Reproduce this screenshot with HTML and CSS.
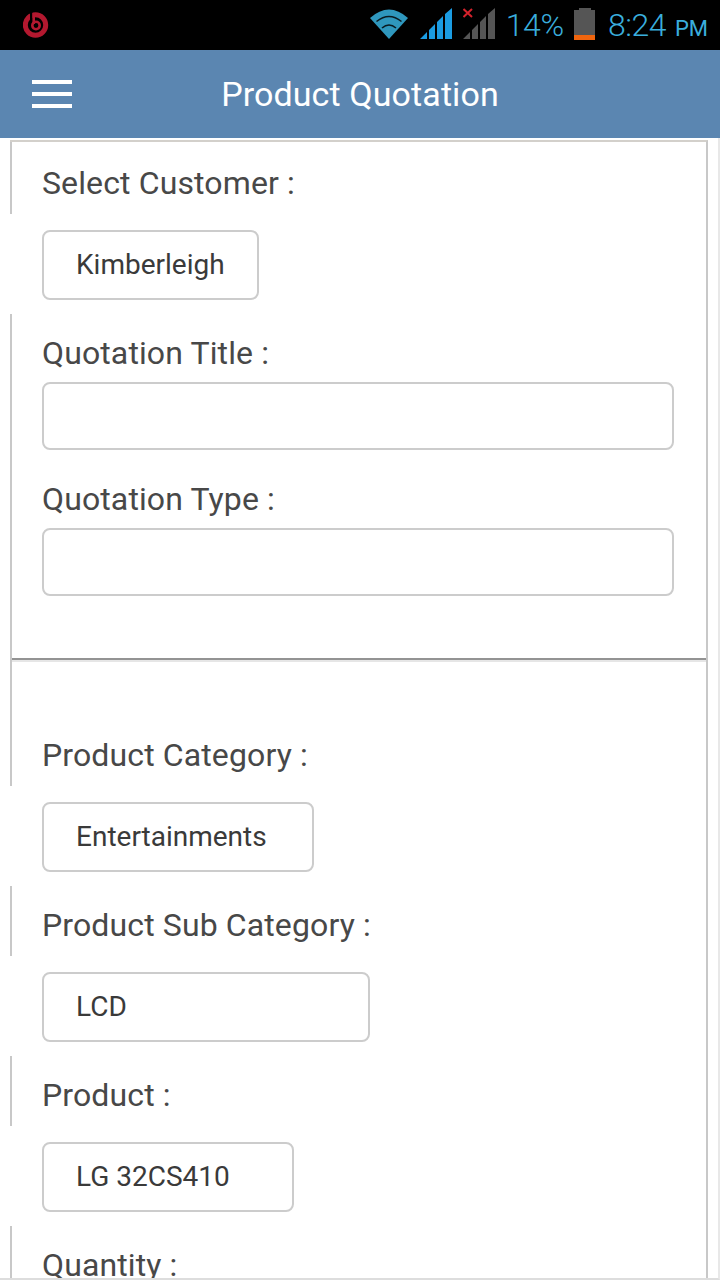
FILE: index.html
```html
<!DOCTYPE html>
<html lang="en">
<head>
<meta charset="utf-8">
<title>Product Quotation</title>
<link rel="stylesheet" href="styles.css">
</head>
<body>
<div class="status">
  <svg class="beats" width="26" height="26" viewBox="0 0 26 26">
    <circle cx="12.5" cy="13" r="10.2" fill="none" stroke="#b3182f" stroke-width="5"/>
    <rect x="7" y="0" width="2.4" height="13" fill="#000"/>
    <rect x="9.4" y="1" width="2.6" height="11" fill="#b3182f"/>
    <circle cx="13" cy="13.5" r="3.7" fill="none" stroke="#b3182f" stroke-width="2.6"/>
  </svg>
  <div class="status-right">
    <svg class="wifi" width="40" height="32" viewBox="0 0 40 32">
      <path d="M20 31 L1 10 Q20 -7 39 10 Z" fill="#2f97bd"/>
      <path d="M7.5 13.5 Q20 3.5 32.5 13.5 M13 20 Q20 14 27 20" fill="none" stroke="#0a1a20" stroke-width="1.6"/>
    </svg>
    <svg class="sig1" width="32" height="32" viewBox="0 0 32 32">
      <path d="M0 31 L7 24 V31 Z M9 22 L15 16 V31 H9 Z M17 14 L23 8 V31 H17 Z M25 6 L32 0 V31 H25 Z" fill="#1b9ce2"/>
    </svg>
    <svg class="sig2" width="32" height="32" viewBox="0 0 32 32">
      <path d="M0 31 L7 24 V31 Z M9 22 L15 16 V31 H9 Z M17 14 L23 8 V31 H17 Z M25 6 L32 0 V31 H25 Z" fill="#555"/>
      <path d="M0.5 1 L9 9 M9 1 L0.5 9" stroke="#d4222c" stroke-width="2"/>
    </svg>
    <span class="pct">14%</span>
    <svg class="batt" width="22" height="32" viewBox="0 0 22 32">
      <path d="M5 0 H17 V2 H21 V32 H0 V2 H5 Z" fill="#555"/>
      <rect x="0" y="27" width="21" height="5" fill="#f0650e"/>
    </svg>
    <span class="time">8:24<small class="ampm">PM</small></span>
  </div>
</div>
<header class="bar">
  <div class="burger"><i></i><i></i><i></i></div>
  <h1 class="title">Product Quotation</h1>
</header>
<main class="page">
  <div class="panel">
    <div class="blk first"><label class="lbl">Select Customer :</label></div>
    <div class="sel">Kimberleigh</div>
    <div class="blk">
      <label class="lbl">Quotation Title :</label>
      <div class="inp"></div>
      <label class="lbl lbl2">Quotation Type :</label>
      <div class="inp"></div>
      <hr class="rule">
      <label class="lbl lbl3">Product Category :</label>
    </div>
    <div class="sel w-cat">Entertainments</div>
    <div class="blk"><label class="lbl">Product Sub Category :</label></div>
    <div class="sel w-sub">LCD</div>
    <div class="blk"><label class="lbl">Product :</label></div>
    <div class="sel w-prod">LG 32CS410</div>
    <div class="blk"><label class="lbl">Quantity :</label></div>
  </div>
</main>
</body>
</html>
```
FILE: styles.css
```css
html, body {
  margin: 0;
  padding: 0;
  height: 1280px;
  overflow: hidden;
  background: #fff;
  font-family: Roboto, "Liberation Sans", sans-serif;
}
.status {
  height: 50px;
  background: #000;
  display: flex;
  align-items: flex-start;
  justify-content: space-between;
  box-sizing: border-box;
}
.beats { margin: 12px 0 0 23px; }
.status-right {
  display: flex;
  align-items: flex-start;
  margin-right: 12px;
  color: #3aaedd;
}
.wifi { margin-top: 8px; }
.sig1 { margin: 8px 0 0 11px; }
.sig2 { margin: 8px 0 0 11px; }
.pct {
  margin-left: 11px;
  font-size: 32px;
  font-weight: 300;
  line-height: 50px;
  letter-spacing: -0.3px;
}
.batt { margin: 8px 0 0 10px; }
.time {
  margin-left: 12px;
  font-size: 32px;
  font-weight: 300;
  line-height: 50px;
  letter-spacing: -0.5px;
}
.ampm { font-size: 22px; margin-left: 9px; font-weight: 400; letter-spacing: 0; }
.bar {
  height: 88px;
  background: #5b86b1;
  display: flex;
  align-items: center;
  justify-content: center;
  position: relative;
}
.burger {
  position: absolute;
  left: 32px;
  top: 30px;
  width: 40px;
  display: flex;
  flex-direction: column;
  gap: 8px;
}
.burger i { display: block; height: 4px; background: #fff; }
.title {
  margin: 0;
  font-size: 34px;
  font-weight: 400;
  color: #fff;
  line-height: 88px;
  letter-spacing: 0.1px;
}
.page {
  padding: 2px 0 0 10px;
  border-right: 2px solid #e8e8e8;
  border-bottom: 2px solid #ddd;
  height: 1142px;
  box-sizing: border-box;
  overflow: hidden;
}
.panel {
  width: 698px;
  box-sizing: border-box;
  border-top: 2px solid #d3d0cb;
  border-right: 2px solid #c8c8c8;
  min-height: 1200px;
}
.blk {
  border-left: 2px solid #c8c8c8;
  padding: 21px 0 13px 30px;
  margin-top: 14px;
  display: flex;
  flex-direction: column;
  align-items: flex-start;
}
.blk.first { margin-top: 0; padding-top: 23px; }
.lbl {
  font-size: 32px;
  line-height: 36px;
  color: #484848;
  white-space: nowrap;
  letter-spacing: 0.12px;
}
.lbl2 { margin-top: 31px; }
.lbl3 { margin-top: 77px; }
.inp {
  margin-top: 11px;
  width: 632px;
  height: 68px;
  box-sizing: border-box;
  border: 2px solid #ccc;
  border-radius: 8px;
  background: #fff;
}
.rule {
  margin: 62px 0 0 -30px;
  width: 694px;
  height: 2px;
  border: 0;
  background: #939393;
  box-shadow: 0 2px 0 #e6e6e6;
}
.sel {
  margin: 16px 0 0 32px;
  display: table;
  box-sizing: border-box;
  height: 70px;
  line-height: 66px;
  padding: 0 32px;
  border: 2px solid #ccc;
  border-radius: 8px;
  font-size: 28px;
  color: #3a3a3a;
  background: #fff;
}
.w-cat { width: 272px; }
.w-sub { width: 328px; }
.w-prod { width: 252px; }
```
